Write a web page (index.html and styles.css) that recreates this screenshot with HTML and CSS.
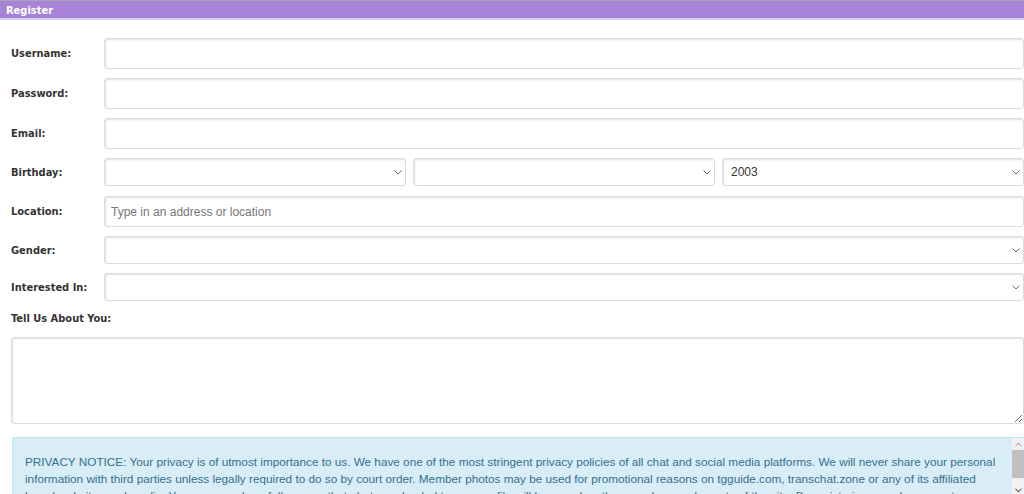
FILE: index.html
```html
<!DOCTYPE html>
<html>
<head>
<meta charset="utf-8">
<link rel="stylesheet" href="styles.css">
</head>
<body>
<div class="panel-head">Register</div>
<form class="reg-form">
  <div class="row">
    <label class="lbl">Username:</label>
    <input class="field" type="text">
  </div>
  <div class="row">
    <label class="lbl">Password:</label>
    <input class="field" type="password">
  </div>
  <div class="row">
    <label class="lbl">Email:</label>
    <input class="field" type="text">
  </div>
  <div class="row row-sel row-bday">
    <label class="lbl">Birthday:</label>
    <div class="triple">
      <div class="sel-wrap"><select class="sel"><option></option></select><svg class="chev" viewBox="0 0 8 5" width="8" height="5"><path d="M0.5 0.5 L4 4 L7.5 0.5" fill="none" stroke="#666" stroke-width="1"/></svg></div>
      <div class="sel-wrap"><select class="sel"><option></option></select><svg class="chev" viewBox="0 0 8 5" width="8" height="5"><path d="M0.5 0.5 L4 4 L7.5 0.5" fill="none" stroke="#666" stroke-width="1"/></svg></div>
      <div class="sel-wrap"><select class="sel"><option>2003</option></select><svg class="chev" viewBox="0 0 8 5" width="8" height="5"><path d="M0.5 0.5 L4 4 L7.5 0.5" fill="none" stroke="#666" stroke-width="1"/></svg></div>
    </div>
  </div>
  <div class="row">
    <label class="lbl">Location:</label>
    <input class="field" type="text" placeholder="Type in an address or location">
  </div>
  <div class="row row-sel">
    <label class="lbl">Gender:</label>
    <div class="sel-wrap"><select class="sel"><option></option></select><svg class="chev" viewBox="0 0 8 5" width="8" height="5"><path d="M0.5 0.5 L4 4 L7.5 0.5" fill="none" stroke="#666" stroke-width="1"/></svg></div>
  </div>
  <div class="row row-sel">
    <label class="lbl">Interested In:</label>
    <div class="sel-wrap"><select class="sel"><option></option></select><svg class="chev" viewBox="0 0 8 5" width="8" height="5"><path d="M0.5 0.5 L4 4 L7.5 0.5" fill="none" stroke="#666" stroke-width="1"/></svg></div>
  </div>
  <div class="about">
    <label class="lbl">Tell Us About You:</label>
    <textarea class="area"></textarea>
  </div>
  <div class="notice">
    <div class="notice-text">PRIVACY NOTICE: Your privacy is of utmost importance to us. We have one of the most stringent privacy policies of all chat and social media platforms. We will never share your personal information with third parties unless legally required to do so by court order. Member photos may be used for promotional reasons on tgguide.com, transchat.zone or any of its affiliated brand websites and media. You agree and are fully aware that photos uploaded to your profile will be seen by other members and guests of the site. By registering you also agree to our terms of service and community guidelines.</div>
    <div class="vscroll">
      <div class="vs-btn"><svg viewBox="0 0 8 5" width="7" height="5"><path d="M0.5 4.5 L4 1 L7.5 4.5" fill="none" stroke="#a3a3a3" stroke-width="1.2"/></svg></div>
      <div class="vs-thumb"></div>
      <div class="vs-track"></div>
      <div class="vs-btn"><svg viewBox="0 0 8 5" width="7" height="5"><path d="M0.5 0.5 L4 4 L7.5 0.5" fill="none" stroke="#505050" stroke-width="1.2"/></svg></div>
    </div>
  </div>
</form>
</body>
</html>
```
FILE: styles.css
```css
html, body {
  margin: 0;
  padding: 0;
  overflow: hidden;
  background: #fff;
}
body {
  font-family: "Liberation Sans", Arial, sans-serif;
  font-size: 12px;
  color: #333;
  width: 1024px;
  height: 494px;
}
.panel-head {
  height: 20px;
  line-height: 19px;
  background: #a683d6;
  border-top: 1px solid #a9a3b8;
  border-bottom: 2px solid #d9cdef;
  color: #fff;
  font-family: "DejaVu Sans Condensed", "DejaVu Sans", sans-serif;
  font-weight: bold;
  font-size: 11px;
  padding-left: 6px;
  box-sizing: border-box;
}
.reg-form {
  padding: 18px 0 0 11px;
}
.row {
  display: grid;
  grid-template-columns: 93px 1fr;
  align-items: center;
  height: 31px;
  margin-bottom: 9px;
}
.row-sel {
  height: 28px;
}
.row-bday {
  margin-bottom: 10px;
}
.lbl {
  font-family: "DejaVu Sans Condensed", "DejaVu Sans", sans-serif;
  font-weight: bold;
  font-size: 11px;
  color: #333;
}
.field, .sel, .area {
  box-sizing: border-box;
  border: 1px solid #dcdcdc;
  border-radius: 3px;
  box-shadow: inset 1px 1px 2px rgba(0,0,0,0.12);
  background: #fff;
  font-family: "Liberation Sans", Arial, sans-serif;
  font-size: 12px;
  color: #333;
  outline: none;
}
.field {
  height: 31px;
  width: 100%;
  padding: 0 6px;
}
.field::placeholder {
  color: #777;
}
.triple {
  display: grid;
  grid-template-columns: 1fr 1fr 1fr;
  column-gap: 7px;
}
.sel-wrap {
  position: relative;
  height: 28px;
}
.sel {
  appearance: none;
  -webkit-appearance: none;
  width: 100%;
  height: 28px;
  padding: 0 8px;
}
.chev {
  position: absolute;
  right: 4px;
  top: 12px;
  pointer-events: none;
}
.about {
  padding-top: 1px;
}
.about .lbl {
  display: block;
  height: 16px;
  line-height: 16px;
  margin-bottom: 10px;
}
.area {
  display: block;
  width: 1013px;
  height: 87px;
  resize: both;
  margin: 0;
}
.notice {
  box-sizing: border-box;
  margin-top: 13px;
  margin-left: 1px;
  width: 1012px;
  height: 60px;
  display: flex;
  background: #d9edf7;
  border: 1px solid #bce8f1;
  border-right: none;
  border-radius: 3px 0 0 3px;
  overflow: hidden;
}
.notice-text {
  flex: 1;
  overflow: hidden;
  color: #31708f;
  font-family: "Liberation Sans", Arial, sans-serif;
  font-size: 11.75px;
  line-height: 17px;
  padding: 15px 12px 0 12px;
}
.vscroll {
  width: 12px;
  flex: none;
  display: flex;
  flex-direction: column;
  background: #f1f1f1;
}
.vs-btn {
  height: 12px;
  display: flex;
  align-items: center;
  justify-content: center;
}
.vs-thumb {
  height: 28px;
  background: #c1c1c1;
}
.vs-track {
  flex: 1;
}
```
